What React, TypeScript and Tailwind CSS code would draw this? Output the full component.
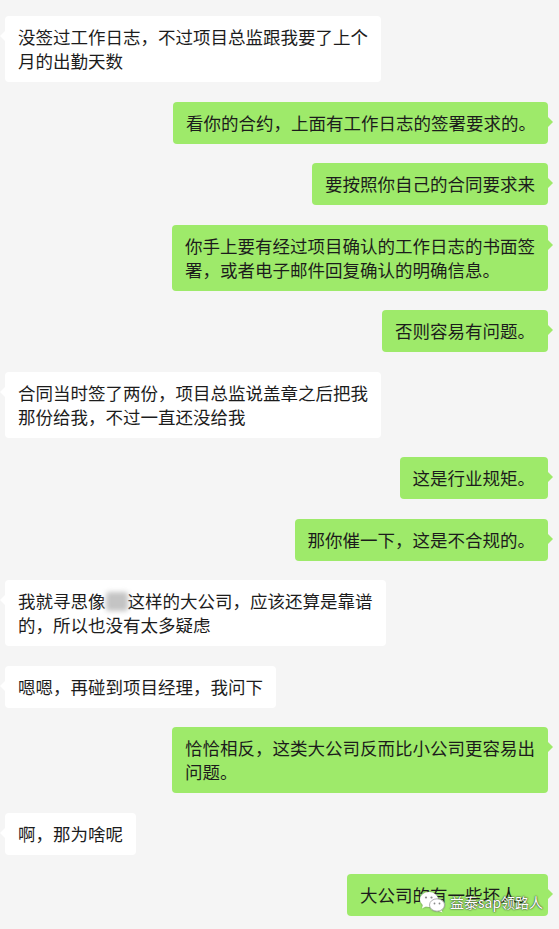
import React from "react";

type Side = "left" | "right";

const FONT = { fontFamily: '"Noto Sans CJK SC", "Noto Sans", sans-serif' };

function Bubble({
  side,
  children,
  className = "",
}: {
  side: Side;
  children: React.ReactNode;
  className?: string;
}) {
  const isRight = side === "right";
  return (
    <div className={`flex ${isRight ? "justify-end" : "justify-start"}`}>
      <div
        className={`relative rounded-[4px] px-[13px] py-[9px] text-[17.5px] leading-[24px] whitespace-nowrap text-[#1c1c1c] ${
          isRight ? "bg-[#9eea6a]" : "bg-white"
        } ${className}`}
      >
        {isRight ? (
          <span className="absolute top-[15px] right-[-5px] w-0 h-0 border-y-[5px] border-y-transparent border-l-[5px] border-l-[#9eea6a]" />
        ) : (
          <span className="absolute top-[15px] left-[-5px] w-0 h-0 border-y-[5px] border-y-transparent border-r-[5px] border-r-white" />
        )}
        {children}
      </div>
    </div>
  );
}

function WeChatLogo() {
  return (
    <svg width="27" height="22" viewBox="0 0 27 22">
      <defs>
        <filter id="sh" x="-30%" y="-30%" width="160%" height="160%">
          <feDropShadow dx="0" dy="0" stdDeviation="0.8" floodColor="#555" floodOpacity="0.8" />
        </filter>
      </defs>
      <g filter="url(#sh)">
        <ellipse cx="10" cy="8.5" rx="9" ry="7.5" fill="#fff" />
        <path d="M4 13.5 L3 17.5 L7.5 15 Z" fill="#fff" />
        <ellipse cx="18" cy="14" rx="7.5" ry="6.2" fill="#fff" />
        <path d="M22 18.5 L23.5 21.5 L19 19.5 Z" fill="#fff" />
      </g>
      <ellipse cx="18" cy="14" rx="7.5" ry="6.2" fill="none" stroke="#9a9a9a" strokeWidth="0.8" />
      <circle cx="7" cy="6.5" r="1.1" fill="#8a8a8a" />
      <circle cx="12.5" cy="6.5" r="1.1" fill="#8a8a8a" />
      <circle cx="15.5" cy="12.5" r="0.9" fill="#8a8a8a" />
      <circle cx="20.5" cy="12.5" r="0.9" fill="#8a8a8a" />
    </svg>
  );
}

export default function App() {
  return (
    <div className="relative w-[559px] h-[929px] overflow-hidden bg-[#f5f5f5]" style={FONT}>
      <div className="flex flex-col gap-[19.5px] pt-[16px] pl-[5px] pr-[11px]">
        <Bubble side="left">
          没签过工作日志，不过项目总监跟我要了上个
          <br />
          月的出勤天数
        </Bubble>
        <Bubble side="right" className="w-[375px]">
          看你的合约，上面有工作日志的签署要求的。
        </Bubble>
        <Bubble side="right">要按照你自己的合同要求来</Bubble>
        <Bubble side="right">
          你手上要有经过项目确认的工作日志的书面签
          <br />
          署，或者电子邮件回复确认的明确信息。
        </Bubble>
        <Bubble side="right">否则容易有问题。</Bubble>
        <Bubble side="left">
          合同当时签了两份，项目总监说盖章之后把我
          <br />
          那份给我，不过一直还没给我
        </Bubble>
        <Bubble side="right">这是行业规矩。</Bubble>
        <Bubble side="right">那你催一下，这是不合规的。</Bubble>
        <Bubble side="left">
          我就寻思像
          <span className="inline-block w-[22px] h-[19px] align-[-3px] bg-[#c4c4c4] blur-[2.5px] rounded-[3px]" />
          这样的大公司，应该还算是靠谱
          <br />
          的，所以也没有太多疑虑
        </Bubble>
        <Bubble side="left">嗯嗯，再碰到项目经理，我问下</Bubble>
        <Bubble side="right">
          恰恰相反，这类大公司反而比小公司更容易出
          <br />
          问题。
        </Bubble>
        <Bubble side="left">啊，那为啥呢</Bubble>
        <Bubble side="right">大公司的有一些坏人。</Bubble>
      </div>

      <div className="absolute left-[419px] top-[891px] flex items-center gap-[4px]">
        <WeChatLogo />
        <span
          className="text-[14px] leading-[18px] text-white whitespace-nowrap"
          style={{ textShadow: "0 0 2px rgba(40,40,40,0.9), 0 0 1px rgba(40,40,40,0.9)" }}
        >
          益泰sap领路人
        </span>
      </div>
    </div>
  );
}
